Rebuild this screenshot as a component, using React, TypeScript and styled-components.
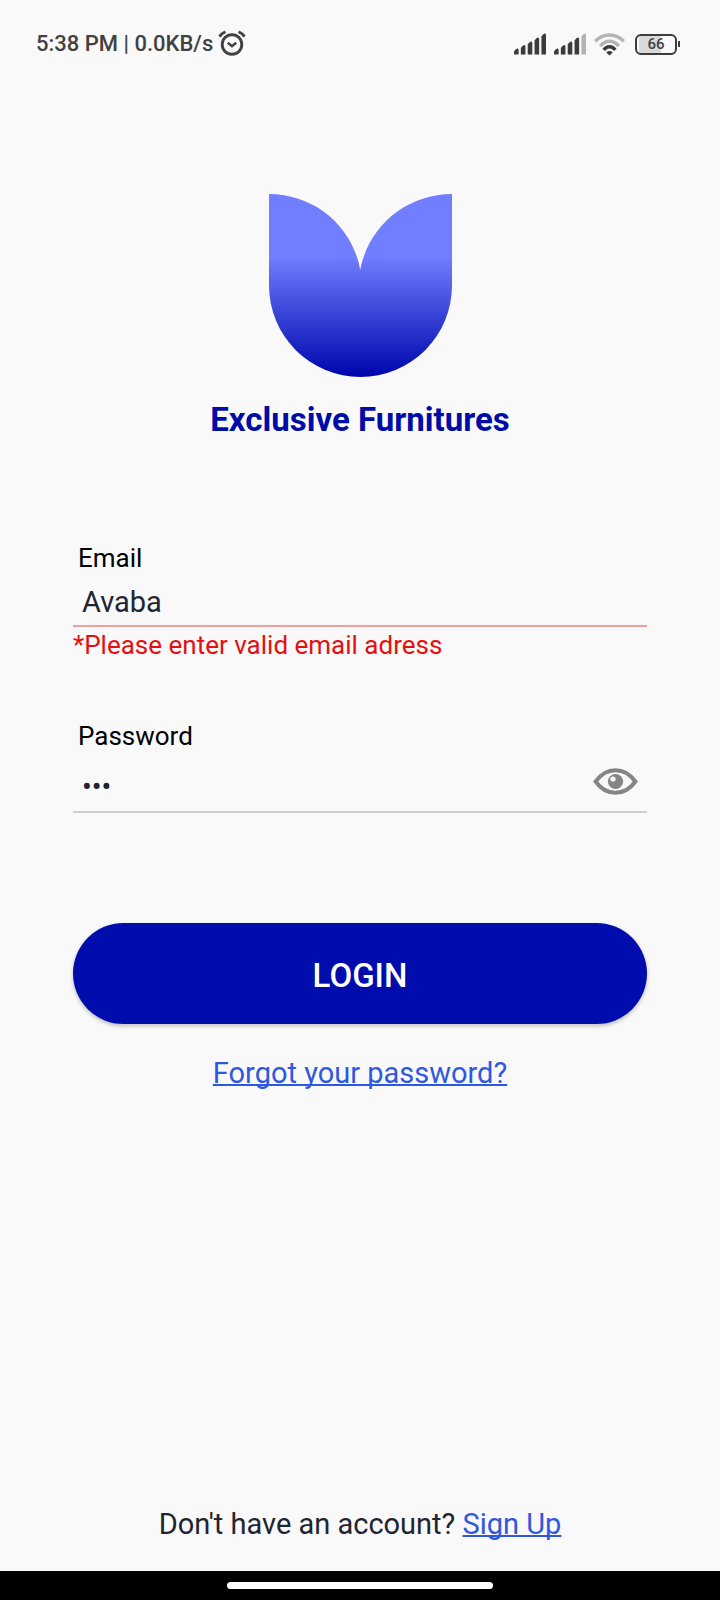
import React, { useState } from "react";
import styled, { createGlobalStyle } from "styled-components";

const GlobalStyle = createGlobalStyle`
  *, *::before, *::after { box-sizing: border-box; }
  body {
    margin: 0;
    background: #f9f9f9;
    font-family: Roboto, "Noto Sans", sans-serif;
    color: #212432;
  }
`;

const Screen = styled.div`
  display: flex;
  flex-direction: column;
  min-height: 100vh;
  background: #f9f9f9;
`;

const StatusBar = styled.header`
  display: flex;
  align-items: center;
  justify-content: space-between;
  height: 88px;
  padding: 0 40px 0 36px;
  color: #414141;
`;

const StatusGroup = styled.div<{ $gap: number }>`
  display: flex;
  align-items: center;
  gap: ${({ $gap }) => $gap}px;
`;

const StatusText = styled.span`
  font-size: 22px;
  font-weight: 500;
  line-height: 28px;
  white-space: nowrap;
`;

const Battery = styled.div`
  display: flex;
  align-items: center;
  margin-left: 2px;
`;

const BatteryBody = styled.div`
  display: flex;
  align-items: center;
  justify-content: center;
  width: 42px;
  height: 21px;
  border: 2px solid #3c3c3c;
  border-radius: 6px;
  background: linear-gradient(90deg, #f9f9f9 2px, #dadada 2px, #dadada 24px, #f9f9f9 24px);
  font-size: 15px;
  font-weight: 500;
  line-height: 17px;
`;

const BatteryTip = styled.div`
  width: 2px;
  height: 6px;
  margin-left: 1px;
  background: #3c3c3c;
`;

const Main = styled.main`
  display: flex;
  flex: 1;
  flex-direction: column;
  padding: 106px 73px 30px;
`;

const Brand = styled.div`
  display: flex;
  flex-direction: column;
  align-items: center;
  gap: 23px;
`;

const BrandName = styled.h1`
  margin: 0;
  font-size: 33px;
  font-weight: 700;
  line-height: 40px;
  color: #000ca8;
`;

const Form = styled.form`
  display: flex;
  flex-direction: column;
  margin-top: 102px;
`;

const Field = styled.div`
  display: flex;
  flex-direction: column;
  & + & { margin-top: 59px; }
`;

const Label = styled.label`
  padding-left: 5px;
  font-size: 26px;
  line-height: 32px;
  color: #000;
`;

const InputRow = styled.div<{ $invalid?: boolean }>`
  display: flex;
  align-items: center;
  margin-top: ${({ $invalid }) => ($invalid ? 5 : 8)}px;
  border-bottom: 2px solid ${({ $invalid }) => ($invalid ? "#efa09c" : "#d0d0d0")};
`;

const Input = styled.input<{ $tall?: boolean }>`
  flex: 1;
  min-width: 0;
  height: ${({ $tall }) => ($tall ? 51 : 46)}px;
  padding: ${({ $tall }) => ($tall ? 3 : 0)}px 9px 0;
  border: 0;
  outline: 0;
  background: transparent;
  font: inherit;
  font-size: 29px;
  color: #212432;
`;

const EyeButton = styled.button`
  display: flex;
  padding: 0 9px 8px;
  border: 0;
  background: transparent;
  cursor: pointer;
`;

const ErrorText = styled.p`
  margin: 2px 0 0;
  font-size: 26px;
  line-height: 32px;
  color: #e60f0f;
`;

const LoginButton = styled.button`
  height: 101px;
  margin-top: 110px;
  padding: 4px 0 0;
  border: 0;
  border-radius: 51px;
  background: #000cac;
  box-shadow: 0 2px 4px rgba(0, 0, 0, 0.24);
  font-family: inherit;
  font-size: 33px;
  font-weight: 500;
  line-height: 40px;
  color: #fff;
  cursor: pointer;
`;

const TextLink = styled.a`
  font-size: 29px;
  line-height: 34px;
  color: #2f58e0;
  text-decoration: underline;
  text-decoration-thickness: 2px;
  text-underline-offset: 1px;
  text-decoration-skip-ink: none;
`;

const ForgotLink = styled(TextLink)`
  align-self: center;
  margin-top: 32px;
`;

const SignUp = styled.p`
  margin: auto 0 0;
  font-size: 29px;
  line-height: 34px;
  text-align: center;
`;

const NavBar = styled.footer`
  display: flex;
  align-items: center;
  justify-content: center;
  height: 29px;
  background: #000;
`;

const HomeHandle = styled.div`
  width: 37%;
  height: 7px;
  border-radius: 4px;
  background: #fff;
`;

function AlarmIcon() {
  return (
    <svg width="28" height="28" viewBox="0 0 28 28" fill="none" stroke="#414141" aria-hidden="true">
      <circle cx="14" cy="14.5" r="9.8" strokeWidth="2.9" />
      <path d="M9.8 12.7 L14 16.2 L18.2 12.7" strokeWidth="2.5" />
      <path d="M1.5 6.6 Q3.6 3.4 7.4 1.7 M26.5 6.6 Q24.4 3.4 20.6 1.7" strokeWidth="2.9" />
    </svg>
  );
}

const BAR_TOPS = [15.5, 12, 8.5, 4.5, 0.5];

function SignalIcon({ level }: { level: number }) {
  return (
    <svg width="32" height="22" viewBox="0 0 32 22" aria-hidden="true">
      {BAR_TOPS.map((top, i) => {
        const x = i * 6.85;
        return (
          <path
            key={top}
            d={`M${x} 21.5 V${top + 3} Q${x + 1.6} ${top + 0.4} ${x + 3.2} ${top} Q${x + 4.6} ${top} ${x + 4.6} ${top + 1.4} V21.5 Z`}
            fill={i < level ? "#3c3c3c" : "#b4b4b4"}
          />
        );
      })}
    </svg>
  );
}

function WifiIcon() {
  return (
    <svg width="31" height="23" viewBox="0 0 31 23" fill="none" strokeWidth="3.4" aria-hidden="true">
      <path d="M1.2 8.2 Q7.4 2 15.5 2 Q23.6 2 29.8 8.2" stroke="#b4b4b4" />
      <path d="M6.2 13.2 Q10.2 8.3 15.5 8.3 Q20.8 8.3 24.8 13.2" stroke="#b4b4b4" />
      <path d="M9.8 16.9 Q12 13.8 15.5 13.8 Q19 13.8 21.2 16.9" stroke="#3c3c3c" />
      <path d="M12.2 19.4 Q15.5 16.6 18.8 19.4 L15.5 22.6 Z" fill="#3c3c3c" stroke="none" />
    </svg>
  );
}

function Logo() {
  return (
    <svg width="183" height="183" viewBox="0 0 183 183" role="img" aria-label="Exclusive Furnitures logo">
      <defs>
        <linearGradient id="petal" x1="0" y1="0" x2="0" y2="1">
          <stop offset="0.34" stopColor="#717eff" />
          <stop offset="0.98" stopColor="#0009ae" />
        </linearGradient>
      </defs>
      <path
        d="M0 0 C46 0 84 33 91.2 76 C99 33 137 0 183 0 V91.5 A91.5 91.5 0 0 1 0 91.5 Z"
        fill="url(#petal)"
      />
    </svg>
  );
}

function EyeIcon() {
  return (
    <svg width="45" height="27" viewBox="0 0 45 27" fill="none" aria-hidden="true">
      <path
        d="M2.6 13.5 C8 6 14.5 2.2 22.5 2.2 C30.5 2.2 37 6 42.4 13.5 C37 21 30.5 24.8 22.5 24.8 C14.5 24.8 8 21 2.6 13.5 Z"
        stroke="#858585"
        strokeWidth="4"
      />
      <circle cx="22.5" cy="13.5" r="7.6" fill="#858585" />
      <circle cx="20" cy="11" r="2.6" fill="#f9f9f9" />
    </svg>
  );
}

export default function App() {
  const [email, setEmail] = useState("Avaba");
  const [password, setPassword] = useState("123");
  const [visible, setVisible] = useState(false);

  return (
    <>
      <GlobalStyle />
      <Screen>
        <StatusBar>
          <StatusGroup $gap={5}>
            <StatusText>5:38 PM | 0.0KB/s</StatusText>
            <AlarmIcon />
          </StatusGroup>
          <StatusGroup $gap={8}>
            <SignalIcon level={5} />
            <SignalIcon level={4} />
            <WifiIcon />
            <Battery>
              <BatteryBody>66</BatteryBody>
              <BatteryTip />
            </Battery>
          </StatusGroup>
        </StatusBar>
        <Main>
          <Brand>
            <Logo />
            <BrandName>Exclusive Furnitures</BrandName>
          </Brand>
          <Form onSubmit={(e) => e.preventDefault()}>
            <Field>
              <Label htmlFor="email">Email</Label>
              <InputRow $invalid>
                <Input
                  id="email"
                  type="text"
                  value={email}
                  aria-invalid="true"
                  aria-describedby="email-error"
                  onChange={(e) => setEmail(e.target.value)}
                />
              </InputRow>
              <ErrorText id="email-error">*Please enter valid email adress</ErrorText>
            </Field>
            <Field>
              <Label htmlFor="password">Password</Label>
              <InputRow>
                <Input
                  id="password"
                  $tall
                  type={visible ? "text" : "password"}
                  value={password}
                  onChange={(e) => setPassword(e.target.value)}
                />
                <EyeButton type="button" aria-label="Show password" onClick={() => setVisible(!visible)}>
                  <EyeIcon />
                </EyeButton>
              </InputRow>
            </Field>
            <LoginButton type="submit">LOGIN</LoginButton>
            <ForgotLink href="#forgot">Forgot your password?</ForgotLink>
          </Form>
          <SignUp>
            Don't have an account? <TextLink href="#signup">Sign Up</TextLink>
          </SignUp>
        </Main>
        <NavBar>
          <HomeHandle />
        </NavBar>
      </Screen>
    </>
  );
}
